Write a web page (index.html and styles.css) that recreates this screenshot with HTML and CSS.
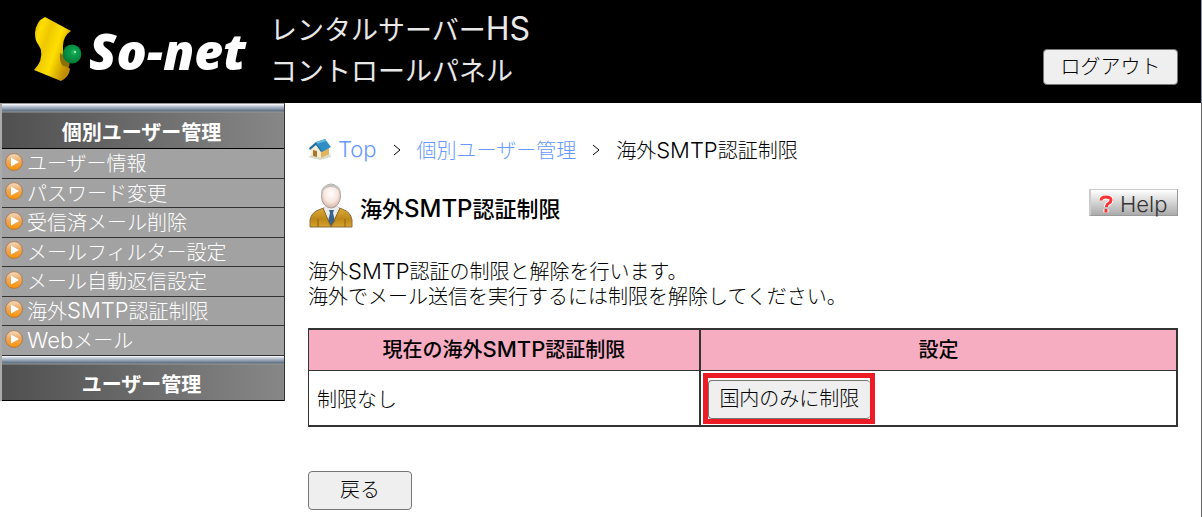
FILE: index.html
```html
<!DOCTYPE html>
<html lang="ja">
<head>
    <meta charset="UTF-8">
    <meta name="viewport" content="width=device-width, initial-scale=1.0">
    <title>レンタルサーバーHS コントロールパネル</title>
    <link rel="stylesheet" href="styles.css">
</head>
<body>
    <!-- アイコン定義 -->
    <svg class="defs" width="0" height="0" aria-hidden="true">
        <defs>
            <linearGradient id="orange" x1="0" y1="0" x2="0" y2="1">
                <stop offset="0" stop-color="#f3ddc8"/>
                <stop offset="0.45" stop-color="#eda95f"/>
                <stop offset="1" stop-color="#ff9200"/>
            </linearGradient>
            <symbol id="arrow" viewBox="0 0 18 18">
                <circle cx="9" cy="9" r="8.4" fill="url(#orange)" stroke="#a8703c" stroke-width="0.8"/>
                <path d="M6 4.5v9l8-4.5z" fill="#fff"/>
            </symbol>
        </defs>
    </svg>

    <!-- ヘッダー -->
    <header class="header">
        <svg class="logo-mark" viewBox="0 0 48 66" aria-hidden="true">
            <defs>
                <linearGradient id="yellow" x1="0" y1="0" x2="1" y2="0.6">
                    <stop offset="0" stop-color="#c99a00"/>
                    <stop offset="0.2" stop-color="#ffe000"/>
                    <stop offset="0.4" stop-color="#eec800"/>
                    <stop offset="0.65" stop-color="#ffe000"/>
                    <stop offset="1" stop-color="#c08c00"/>
                </linearGradient>
                <radialGradient id="green" cx="0.6" cy="0.4" r="0.6">
                    <stop offset="0" stop-color="#2cbf68"/>
                    <stop offset="0.3" stop-color="#0a9f4c"/>
                    <stop offset="1" stop-color="#047a38"/>
                </radialGradient>
            </defs>
            <path d="M11 1L37 15Q29 20 29 30V38Q30 48 36 53Q35 61 27 65L0 54Q9 45 7 34C5 28 1 27 1 17Q2 5 11 1z" fill="url(#yellow)"/>
            <path d="M26 37Q25 46 29 50L35 51L36 45z" fill="#8c7000"/>
            <circle cx="38" cy="38" r="9.4" fill="url(#green)"/>
            <circle cx="41" cy="36" r="1" fill="#c8f5d8"/>
        </svg>
        <div class="logo-text">So-net</div>
        <div class="product">レンタルサーバー<span class="en">HS</span><br>コントロールパネル</div>
        <button class="btn logout" type="button">ログアウト</button>
    </header>

    <div class="layout">
        <!-- サイドメニュー -->
        <nav class="sidebar">
            <h2 class="menu-title">個別ユーザー管理</h2>
            <ul class="menu">
                <li><a href="#"><svg class="arrow"><use href="#arrow"/></svg>ユーザー情報</a></li>
                <li><a href="#"><svg class="arrow"><use href="#arrow"/></svg>パスワード変更</a></li>
                <li><a href="#"><svg class="arrow"><use href="#arrow"/></svg>受信済メール削除</a></li>
                <li><a href="#"><svg class="arrow"><use href="#arrow"/></svg>メールフィルター設定</a></li>
                <li><a href="#"><svg class="arrow"><use href="#arrow"/></svg>メール自動返信設定</a></li>
                <li><a href="#"><svg class="arrow"><use href="#arrow"/></svg>海外<span class="en">SMTP</span>認証制限</a></li>
                <li><a href="#"><svg class="arrow"><use href="#arrow"/></svg><span class="en">Web</span>メール</a></li>
            </ul>
            <h2 class="menu-title">ユーザー管理</h2>
        </nav>

        <!-- メイン -->
        <main class="main">
            <div class="breadcrumb">
                <svg class="home" viewBox="0 0 24 22" aria-hidden="true">
                    <path d="M0 19L7 15L22 16L23 19L12 22z" fill="#d9dcc9"/>
                    <path d="M3 10L8 6L13 13V20L3 17z" fill="#f5ecd2"/>
                    <path d="M13 12L21 9V16L13 20z" fill="#e3b45c"/>
                    <path d="M5 12L9 13V19L5 18z" fill="#a9782f"/>
                    <path d="M8 4L17 1L23 9L14 14z" fill="#2f8fc4"/>
                    <path d="M8 4L17 1L18 3L9 6z" fill="#69b9dd"/>
                    <path d="M8 4L1 10L2 12L8 7L13 14L14 13z" fill="#1f6fa3"/>
                </svg>
                <a class="en" href="#">Top</a>
                <svg class="sep" viewBox="0 0 8 14" role="img" aria-label="&gt;"><path d="M1 2l6 5-6 5"/></svg>
                <a href="#">個別ユーザー管理</a>
                <svg class="sep" viewBox="0 0 8 14" role="img" aria-label="&gt;"><path d="M1 2l6 5-6 5"/></svg>
                <span>海外<span class="en">SMTP</span>認証制限</span>
            </div>

            <div class="heading">
                <svg class="user" viewBox="0 0 46 46" aria-hidden="true">
                    <defs>
                        <linearGradient id="suit" x1="0" y1="0" x2="0" y2="1">
                            <stop offset="0" stop-color="#e0ad3a"/>
                            <stop offset="0.6" stop-color="#bd8818"/>
                            <stop offset="1" stop-color="#d9a12a"/>
                        </linearGradient>
                        <radialGradient id="face" cx="0.5" cy="0.4" r="0.6">
                            <stop offset="0" stop-color="#fff"/>
                            <stop offset="0.6" stop-color="#f8e6de"/>
                            <stop offset="1" stop-color="#d5b2a4"/>
                        </radialGradient>
                    </defs>
                    <path d="M2 44V37Q3 29 13 26L18 24H29L34 26Q43 29 44 37V44z" fill="url(#suit)" stroke="#8a7040"/>
                    <path d="M15 25L23 44L32 25L28 23H19z" fill="#ececec"/>
                    <path d="M21 27H26L25 30L27 38L23 43L20 38L22 30z" fill="#37648e"/>
                    <path d="M15 25L23 44M32 25L23 44M10 36V44M37 36V44" fill="none" stroke="#876119"/>
                    <ellipse cx="23" cy="13" rx="9.5" ry="12" fill="url(#face)" stroke="#a8a19e"/>
                    <path d="M13 13Q12 2 23 1Q34 2 33 13Q31 4 23 4Q15 4 13 13z" fill="#c3c0be"/>
                </svg>
                <h1>海外<span class="en">SMTP</span>認証制限</h1>
                <button class="help" type="button">
                    <svg class="question" viewBox="0 0 14 18" aria-hidden="true">
                        <path d="M2 5.5Q2 2 7 2Q12 2 12 5Q12 7 9.5 8.5Q7.5 9.5 7.5 12M7 14V17.5" fill="none" stroke="#fff" stroke-width="5"/>
                        <path d="M2 5.5Q2 2 7 2Q12 2 12 5Q12 7 9.5 8.5Q7.5 9.5 7.5 12M7 14V17.5" fill="none" stroke="#f33" stroke-width="3"/>
                    </svg>
                    <span class="en">Help</span>
                </button>
            </div>

            <p class="lead">海外<span class="en">SMTP</span>認証の制限と解除を行います。<br>海外でメール送信を実行するには制限を解除してください。</p>

            <table class="setting">
                <thead>
                    <tr>
                        <th class="status">現在の海外<span class="en">SMTP</span>認証制限</th>
                        <th>設定</th>
                    </tr>
                </thead>
                <tbody>
                    <tr>
                        <td class="status">制限なし</td>
                        <td class="action"><div class="mark"><button class="btn restrict" type="button">国内のみに制限</button></div></td>
                    </tr>
                </tbody>
            </table>

            <button class="btn back" type="button">戻る</button>
        </main>
    </div>
</body>
</html>
```
FILE: styles.css
```css
* {
    box-sizing: border-box;
}
body {
    margin: 0;
    min-height: 100vh;
    display: flex;
    flex-direction: column;
    background-color: #fff;
    color: #000;
    font-family: "Noto Sans CJK JP", sans-serif;
    font-size: 20px;
    font-weight: 300;
    line-height: 25px;
}
.defs {
    position: absolute;
}
a {
    color: #69f;
    text-decoration: none;
}
.en {
    font-family: Inter, "Liberation Sans", sans-serif;
    font-size: 22px;
    line-height: 20px;
}
.btn {
    background-color: #efefef;
    border: 1px solid #767676;
    border-radius: 4px;
    color: #000;
    font: inherit;
    padding: 0 0 4px;
    cursor: pointer;
}

/* ヘッダー */
.header {
    display: flex;
    align-items: flex-start;
    height: 103px;
    padding: 8px 23px 0 34px;
    background-color: #000;
    border-right: 1px solid #8391a5;
    color: #fff;
}
.logo-mark {
    width: 48px;
    height: 66px;
    margin-top: 8px;
}
.logo-text {
    width: 181px;
    margin-left: 7px;
    padding-top: 18px;
    font-family: "Open Sans", sans-serif;
    font-size: 50px;
    font-style: italic;
    font-weight: 800;
    line-height: 50px;
}
.product {
    color: #e8e8e8;
    font-size: 27px;
    font-weight: 400;
    line-height: 41px;
}
.product .en {
    font-size: 32px;
}
.logout {
    width: 135px;
    height: 36px;
    margin-top: 41px;
    margin-left: auto;
}

/* サイドメニュー */
.layout {
    flex: 1;
    display: flex;
    align-items: flex-start;
    border-right: 1px solid #666;
}
.sidebar {
    flex: none;
    width: 285px;
    border-top: 1px solid #999;
    border-right: 1px solid #333;
    border-left: 2px solid #aaa;
}
.menu-title {
    height: 45px;
    margin: 0;
    padding: 15px 3px 0 0;
    border-bottom: 1px solid #000;
    background:
        linear-gradient(#fff 0, #c5ccd9 2px, #8797a9 5px, #5b6d7e 7px, #999 8px, transparent 9px) no-repeat 0 0 / 100% 9px,
        linear-gradient(90deg, #505050, #878787);
    color: #fff;
    font-size: 20px;
    font-weight: 700;
    line-height: 25px;
    text-align: center;
}
.menu {
    display: grid;
    grid-auto-rows: 1fr;
    height: 207px;
    margin: 0;
    padding: 0;
    list-style: none;
}
.menu li {
    border-bottom: 1px solid #333;
    background-color: #a2a2a2;
}
.menu a {
    display: flex;
    align-items: center;
    height: 27px;
    padding-left: 3px;
    color: #fff;
}
.arrow {
    width: 18px;
    height: 18px;
    margin-right: 4px;
    margin-bottom: 2px;
}

/* メイン */
.main {
    flex: 1;
    padding: 33px 23px 7px;
}
.breadcrumb {
    display: flex;
    align-items: center;
    height: 26px;
}
.home {
    width: 24px;
    height: 22px;
    margin-right: 6px;
}
.sep {
    width: 8px;
    height: 14px;
    margin: 2px 16px 0;
    fill: none;
    stroke: #000;
}
.heading {
    display: flex;
    align-items: center;
    margin-top: 21px;
    height: 46px;
}
.user {
    width: 46px;
    height: 46px;
    margin-right: 6px;
}
h1 {
    margin: 3px 0 0;
    font-size: 22px;
    font-weight: 500;
    line-height: 25px;
}
h1 .en {
    font-size: 24px;
}
.help {
    display: flex;
    align-items: center;
    width: 89px;
    height: 27px;
    margin-left: auto;
    margin-bottom: 8px;
    padding: 4px 0 0 8px;
    border: 1px solid #999;
    border-top-color: #ccc;
    border-left: 2px solid #ccc;
    background: linear-gradient(#fff, #aaa);
    color: #333;
    font: inherit;
    cursor: pointer;
}
.question {
    width: 14px;
    height: 18px;
    margin-right: 7px;
}
.lead {
    margin: 29px 0 20px;
}
.setting {
    width: 100%;
    table-layout: fixed;
    border-collapse: separate;
    border-spacing: 0;
    border: 2px solid #333;
    border-left-width: 1px;
}
.setting th {
    height: 41px;
    padding: 0 0 3px;
    border-bottom: 1px solid #333;
    background-color: #f7adc1;
    font-weight: 500;
}
.setting td {
    height: 54px;
    padding: 0 8px;
}
.setting .status {
    width: 45.2%;
    border-right: 2px solid #333;
}
.setting .action {
    padding: 0 2px;
}
.mark {
    width: 172px;
    padding-top: 2px;
    border: 5px solid #ed1c24;
}
.restrict {
    display: block;
    width: 100%;
    height: 39px;
    border-right: 0;
}
.back {
    display: block;
    width: 104px;
    height: 39px;
    margin-top: 44px;
}
```
